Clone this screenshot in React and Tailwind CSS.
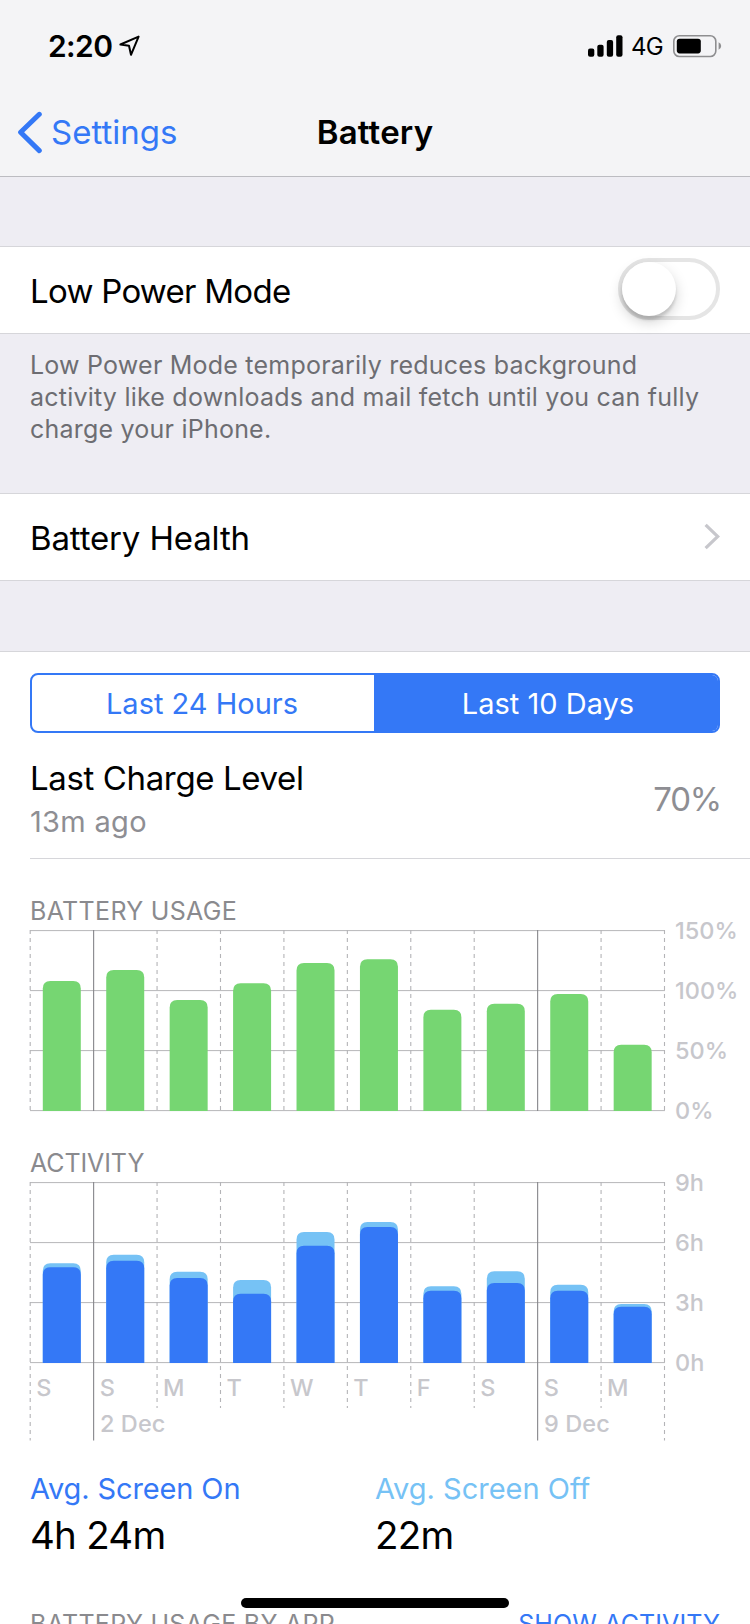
const STEP = 63.43;
const LEFT = 0.2;
const DAYS = ["S", "S", "M", "T", "W", "T", "F", "S", "S", "M"];
const WEEK_STARTS = { 1: "2 Dec", 8: "9 Dec" };

const USAGE = [130, 141, 111, 127.7, 148, 151.7, 101.3, 107.3, 117, 66.3];
const SCREEN_TOTAL = [99.7, 108.3, 91.3, 83, 131, 141, 76.7, 91.7, 78.3, 59];
const SCREEN_ON = [95.7, 102.3, 85, 69.3, 117.3, 136, 72.3, 80, 72.3, 56.3];

function barPath(i, h, bottom) {
  const x = LEFT + STEP * i + 12.6;
  const w = 38;
  const r = 7.5;
  const top = bottom - h;
  return `M${x} ${bottom}V${top + r}Q${x} ${top} ${x + r} ${top}H${x + w - r}Q${x + w} ${top} ${x + w} ${top + r}V${bottom}Z`;
}

function Chart({ height, labels, layers, showDays }) {
  const edges = Array.from({ length: 11 }, (_, i) => i);
  const endOf = (i) => {
    if (!showDays) return 181;
    return i === 0 || i === 10 || WEEK_STARTS[i] ? 258.5 : 226;
  };
  return (
    <svg width="720" height={height} viewBox={`0 0 720 ${height}`} className="block overflow-visible">
      {[0, 1, 2, 3].map((i) => (
        <line key={i} x1="0" x2="635" y1={0.6 + i * 60} y2={0.6 + i * 60} stroke="#b7b7b9" strokeWidth="1" />
      ))}
      {edges.map((i) => (
        <line
          key={i}
          x1={LEFT + STEP * i}
          x2={LEFT + STEP * i}
          y1="0"
          y2={endOf(i)}
          stroke={WEEK_STARTS[i] ? "#85858a" : "#b4b4b7"}
          strokeWidth="1.1"
          strokeDasharray={WEEK_STARTS[i] ? undefined : "4 4"}
        />
      ))}
      {layers.map((layer) =>
        layer.values.map((v, i) => <path key={layer.color + i} d={barPath(i, v, 181)} fill={layer.color} />)
      )}
      <g fill="#c7c7cc" fontSize="23.5" fontWeight="500">
        {labels.map((l, i) => (
          <text key={l} x="645" y={9.4 + i * 60}>{l}</text>
        ))}
        {showDays && DAYS.map((d, i) => (
          <text key={i} x={STEP * i + 6.2} y="213.6">{d}</text>
        ))}
        {showDays && Object.entries(WEEK_STARTS).map(([i, d]) => (
          <text key={i} x={STEP * Number(i) + 6.5} y="250.2" letterSpacing="0.1">{d}</text>
        ))}
      </g>
    </svg>
  );
}

function StatusBar() {
  return (
    <div className="flex h-[88px] items-center justify-between pt-1 pr-[28px] pl-[48px]">
      <div className="flex items-center gap-[7px]">
        <span className="text-[30px] leading-none font-semibold tracking-[-0.6px]">2:20</span>
        <svg width="22" height="22" viewBox="0 0 22 22" fill="none" stroke="#000" strokeWidth="2" strokeLinejoin="round">
          <path d="M19.6 1.6 L1.4 9.5 L10 10.7 L12 19.8 Z" />
        </svg>
      </div>
      <div className="flex items-center">
        <svg width="35" height="22" viewBox="0 0 35 22">
          <rect x="0" y="13.5" width="6.3" height="8.2" rx="2" />
          <rect x="9.3" y="9.7" width="6.3" height="12" rx="2" />
          <rect x="18.8" y="5" width="6.3" height="16.7" rx="2" />
          <rect x="28.2" y="0.3" width="6.3" height="21.4" rx="2" />
        </svg>
        <span className="ml-[8px] pt-[2px] text-[24px] leading-none tracking-[-0.7px]">4G</span>
        <svg className="ml-[9px]" width="50" height="24" viewBox="0 0 50 24">
          <rect x="1.8" y="1.7" width="42" height="20.8" rx="5.5" fill="none" stroke="#8e8e90" strokeWidth="1.6" />
          <rect x="4.8" y="4.8" width="24" height="14.6" rx="2.8" />
          <path d="M46.6 8.2 Q49.2 9.4 49.2 12 Q49.2 14.6 46.6 15.8 Z" fill="#8e8e90" />
        </svg>
      </div>
    </div>
  );
}

export default function App() {
  return (
    <div className="relative flex h-[1624px] w-[750px] flex-col overflow-hidden bg-[#eeedf3] font-['Inter',sans-serif] text-black">
      <header className="h-[177px] shrink-0 border-b border-[#bcbcc1] bg-[#f4f4f6]">
        <StatusBar />
        <div className="grid h-[88px] grid-cols-[1fr_auto_1fr] items-center text-[33px] leading-none">
          <div className="flex items-center pl-[16px] text-[#3478f6]">
            <svg width="28" height="44" viewBox="0 0 28 44" fill="none" stroke="currentColor" strokeWidth="5" strokeLinecap="round" strokeLinejoin="round">
              <path d="M23.3 4.3 L4.6 22.2 L23.3 40.6" />
            </svg>
            <span className="ml-[7px]">Settings</span>
          </div>
          <h1 className="font-semibold tracking-[0.2px]">Battery</h1>
          <div />
        </div>
      </header>

      <section className="mt-[69px] flex h-[88px] shrink-0 items-center justify-between border-y border-[#d6d6da] bg-white px-[30px]">
        <span className="pt-[2px] text-[33px] leading-none tracking-[-0.73px]">Low Power Mode</span>
        <div className="-mt-[2px] h-[62px] w-[102px] rounded-full border-4 border-[#e5e5e5] bg-white">
          <div className="size-[54px] rounded-full bg-white shadow-[0_6px_14px_rgba(0,0,0,0.18),0_4px_3px_rgba(0,0,0,0.13)]" />
        </div>
      </section>
      <p className="mt-[15px] w-[720px] shrink-0 pl-[30px] text-[25px] leading-[32px] tracking-[0.22px] text-[#6d6d72]">
        Low Power Mode temporarily reduces background<br />
        activity like downloads and mail fetch until you can fully<br />
        charge your iPhone.
      </p>

      <section className="mt-[48px] flex h-[88px] shrink-0 items-center justify-between border-y border-[#d6d6da] bg-white px-[30px]">
        <span className="pt-[2px] text-[33px] leading-none tracking-[-0.15px]">Battery Health</span>
        <svg width="18" height="28" viewBox="0 0 18 28" fill="none" stroke="#c7c7cc" strokeWidth="3.2">
          <path d="M3.6 1.8 L15.8 13.5 L3.6 25.2" />
        </svg>
      </section>

      <main className="mt-[70px] h-[973px] shrink-0 border-t border-[#d6d6da] bg-white pl-[30px]">
        <div className="mt-[21px] mr-[30px] grid h-[60px] grid-cols-[342px_1fr] overflow-hidden rounded-[8px] border-2 border-[#3478f6] text-[29px] leading-none">
          <div className="flex items-center justify-center pr-[2px] text-[#3478f6]">Last 24 Hours</div>
          <div className="flex items-center justify-center bg-[#3478f6] pl-[4px] text-white">Last 10 Days</div>
        </div>

        <div className="flex h-[126px] items-center justify-between border-b border-[#d6d6da] pr-[29px]">
          <div className="pt-[8px]">
            <div className="text-[33px] leading-[44px] tracking-[-0.37px]">Last Charge Level</div>
            <div className="text-[29px] leading-[44px] tracking-[0.3px] text-[#8e8e93]">13m ago</div>
          </div>
          <div className="pt-[6px] text-[33px] leading-[44px] tracking-[-1.2px] text-[#8e8e93]">70%</div>
        </div>

        <h2 className="mt-[32px] -mb-px text-[25px] leading-[40px] tracking-[0.32px] text-[#8a8a8e]">BATTERY USAGE</h2>
        <Chart height={181} labels={["150%", "100%", "50%", "0%"]} layers={[{ color: "#76d672", values: USAGE }]} />

        <h2 className="mt-[32px] -mb-px text-[25px] leading-[40px] tracking-[-0.1px] text-[#8a8a8e]">ACTIVITY</h2>
        <Chart
          height={259}
          labels={["9h", "6h", "3h", "0h"]}
          layers={[
            { color: "#76c2f5", values: SCREEN_TOTAL },
            { color: "#3478f6", values: SCREEN_ON },
          ]}
          showDays
        />

        <div className="mt-[28px] mr-[30px] grid grid-cols-2">
          <div>
            <div className="text-[29px] leading-[40px] tracking-[-0.12px] text-[#3478f6]">Avg. Screen On</div>
            <div className="text-[38.5px] leading-[52px] tracking-[-0.75px]">4h 24m</div>
          </div>
          <div>
            <div className="text-[29px] leading-[40px] text-[#76c2f5]">Avg. Screen Off</div>
            <div className="text-[38.5px] leading-[52px] tracking-[-0.75px]">22m</div>
          </div>
        </div>

        <div className="mt-[43px] mr-[30px] flex justify-between text-[25px] leading-[40px]">
          <span className="tracking-[0.27px] text-[#8a8a8e]">BATTERY USAGE BY APP</span>
          <span className="tracking-[0.1px] text-[#3478f6]">SHOW ACTIVITY</span>
        </div>
      </main>

      <div className="absolute bottom-[16px] left-[241px] h-[10px] w-[268px] rounded-full bg-black" />
    </div>
  );
}
